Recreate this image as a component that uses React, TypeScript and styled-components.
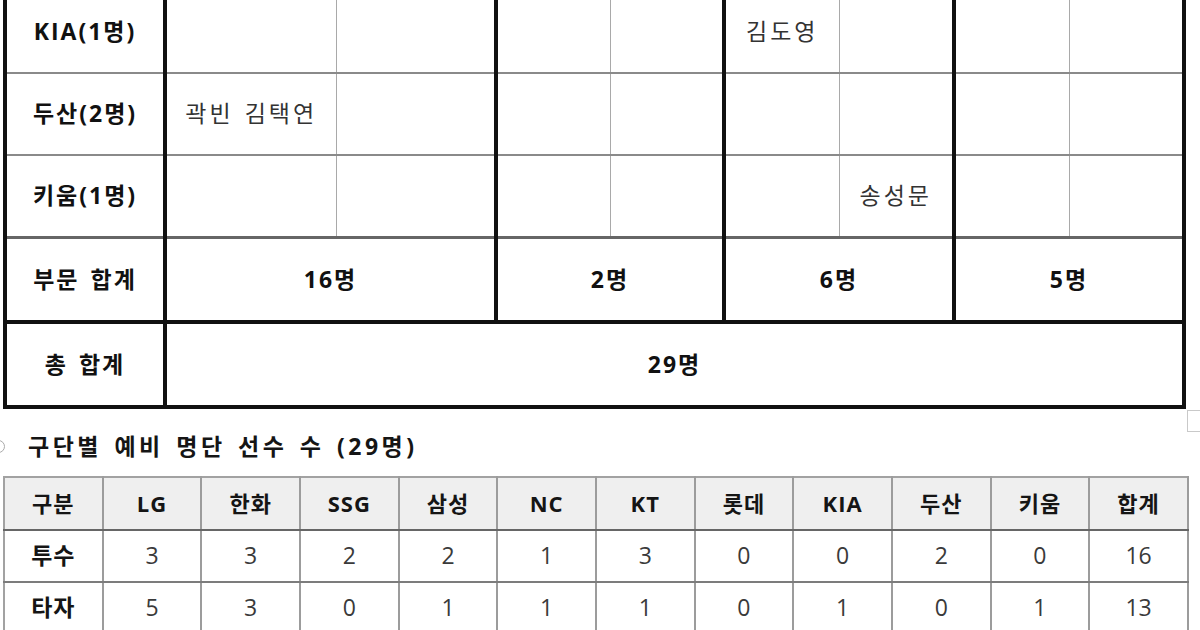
import React from 'react';
import styled, { createGlobalStyle } from 'styled-components';

const GlobalStyle = createGlobalStyle`
  html, body {
    margin: 0;
    padding: 0;
    background: #fff;
  }
  body {
    font-family: "Open Sans", "Noto Sans CJK KR", sans-serif;
    color: #111;
  }
`;

type Edge = 'thick' | 'mid' | 'thin' | 'hair' | 'none';

const edges: Record<Edge, string> = {
  thick: '4px solid #111',
  mid: '3px solid #666',
  thin: '2px solid #8a8a8a',
  hair: '1px solid #a9a9a9',
  none: '0',
};

const Page = styled.div`
  width: 1200px;
  height: 630px;
  overflow: hidden;
`;

const RosterWrap = styled.div`
  position: relative;
  margin-top: -12px;
  padding-left: 3px;
`;

const RosterTable = styled.table`
  border-collapse: collapse;
  table-layout: fixed;
  width: 1183px;
  border: 4px solid #111;
`;

const Cell = styled.td<{ $right?: Edge; $bottom?: Edge; $head?: boolean; $h?: number }>`
  height: ${p => p.$h ?? 80}px;
  padding: 0;
  text-align: center;
  vertical-align: middle;
  font-size: 23px;
  line-height: 1.2;
  white-space: nowrap;
  font-weight: ${p => (p.$head ? 700 : 400)};
  color: ${p => (p.$head ? '#111' : '#333')};
  letter-spacing: ${p => (p.$head ? '2px' : '3px')};
  word-spacing: ${p => (p.$head ? '3px' : '2px')};
  border-right: ${p => edges[p.$right ?? 'none']};
  border-bottom: ${p => edges[p.$bottom ?? 'none']};
`;

const ResizeMark = styled.div`
  position: absolute;
  left: 1187px;
  top: 422px;
  width: 16px;
  height: 22px;
  border: 1px solid #c9c9c9;
  box-sizing: border-box;
`;

const SectionTitle = styled.h2`
  display: flex;
  align-items: center;
  margin: 0;
  padding: 23px 0 15px;
  font-size: 23px;
  font-weight: 700;
  line-height: 1.25;
  letter-spacing: 3.5px;
  word-spacing: 3px;
  color: #151515;
`;

const Bullet = styled.span`
  flex: none;
  width: 13px;
  height: 13px;
  margin: 0 23px 0 -8px;
  border: 1.5px solid #aaa;
  border-radius: 50%;
  box-sizing: border-box;
`;

const CountTable = styled.table`
  border-collapse: collapse;
  table-layout: fixed;
  width: 1186px;
  margin-left: 3px;
  border: 2px solid #a2a2a2;
`;

const HeadCell = styled.th`
  height: 51px;
  padding: 0;
  background: #efefef;
  font-size: 22px;
  font-weight: 700;
  line-height: 1.2;
  letter-spacing: 1px;
  color: #151515;
  text-align: center;
  border-right: 2px solid #9c9c9c;
  border-bottom: 2px solid #666;
`;

const DataCell = styled.td<{ $label?: boolean }>`
  height: 50px;
  padding: 0;
  font-size: 23px;
  line-height: 1.2;
  text-align: center;
  letter-spacing: ${p => (p.$label ? '1px' : '0')};
  font-weight: ${p => (p.$label ? 700 : 400)};
  color: ${p => (p.$label ? '#151515' : '#3a3a3a')};
  border-right: 2px solid #9c9c9c;
  border-bottom: 2px solid #7c7c7c;
`;

const colWidths = [160, 171, 160, 114, 114, 115, 115, 115, 115];

const nameRows = [
  { label: 'KIA(1명)', names: ['', '', '', '', '김도영', '', '', ''] },
  { label: '두산(2명)', names: ['곽빈 김택연', '', '', '', '', '', '', ''] },
  { label: '키움(1명)', names: ['', '', '', '', '', '송성문', '', ''] },
];

const groupTotals = ['16명', '2명', '6명', '5명'];

const teams = ['LG', '한화', 'SSG', '삼성', 'NC', 'KT', '롯데', 'KIA', '두산', '키움'];

const counts = [
  { label: '투수', values: [3, 3, 2, 2, 1, 3, 0, 0, 2, 0] },
  { label: '타자', values: [5, 3, 0, 1, 1, 1, 0, 1, 0, 1] },
];

const rightEdge = (i: number): Edge => (i === 7 ? 'none' : i % 2 === 1 ? 'thick' : 'hair');

export default function App() {
  return (
    <Page>
      <GlobalStyle />
      <RosterWrap>
        <RosterTable>
          <colgroup>
            {colWidths.map((w, i) => (
              <col key={i} style={{ width: w }} />
            ))}
          </colgroup>
          <tbody>
            {nameRows.map((row, r) => {
              const bottom: Edge = r === nameRows.length - 1 ? 'mid' : 'thin';
              return (
                <tr key={row.label}>
                  <Cell $head $right="thick" $bottom={bottom}>
                    {row.label}
                  </Cell>
                  {row.names.map((name, i) => (
                    <Cell key={i} $right={rightEdge(i)} $bottom={bottom}>
                      {name}
                    </Cell>
                  ))}
                </tr>
              );
            })}
            <tr>
              <Cell $head $right="thick" $bottom="thick" $h={81}>
                부문 합계
              </Cell>
              {groupTotals.map((t, i) => (
                <Cell
                  key={t}
                  colSpan={2}
                  $head
                  $h={81}
                  $right={i === groupTotals.length - 1 ? 'none' : 'thick'}
                  $bottom="thick"
                >
                  {t}
                </Cell>
              ))}
            </tr>
            <tr>
              <Cell $head $right="thick" $h={81}>
                총 합계
              </Cell>
              <Cell colSpan={8} $head $h={81}>
                29명
              </Cell>
            </tr>
          </tbody>
        </RosterTable>
        <ResizeMark />
      </RosterWrap>

      <SectionTitle>
        <Bullet />
        구단별 예비 명단 선수 수 (29명)
      </SectionTitle>

      <CountTable>
        <thead>
          <tr>
            <HeadCell>구분</HeadCell>
            {teams.map(t => (
              <HeadCell key={t}>{t}</HeadCell>
            ))}
            <HeadCell>합계</HeadCell>
          </tr>
        </thead>
        <tbody>
          {counts.map(row => (
            <tr key={row.label}>
              <DataCell $label>{row.label}</DataCell>
              {row.values.map((v, i) => (
                <DataCell key={i}>{v}</DataCell>
              ))}
              <DataCell>{row.values.reduce((a, b) => a + b, 0)}</DataCell>
            </tr>
          ))}
        </tbody>
      </CountTable>
    </Page>
  );
}
